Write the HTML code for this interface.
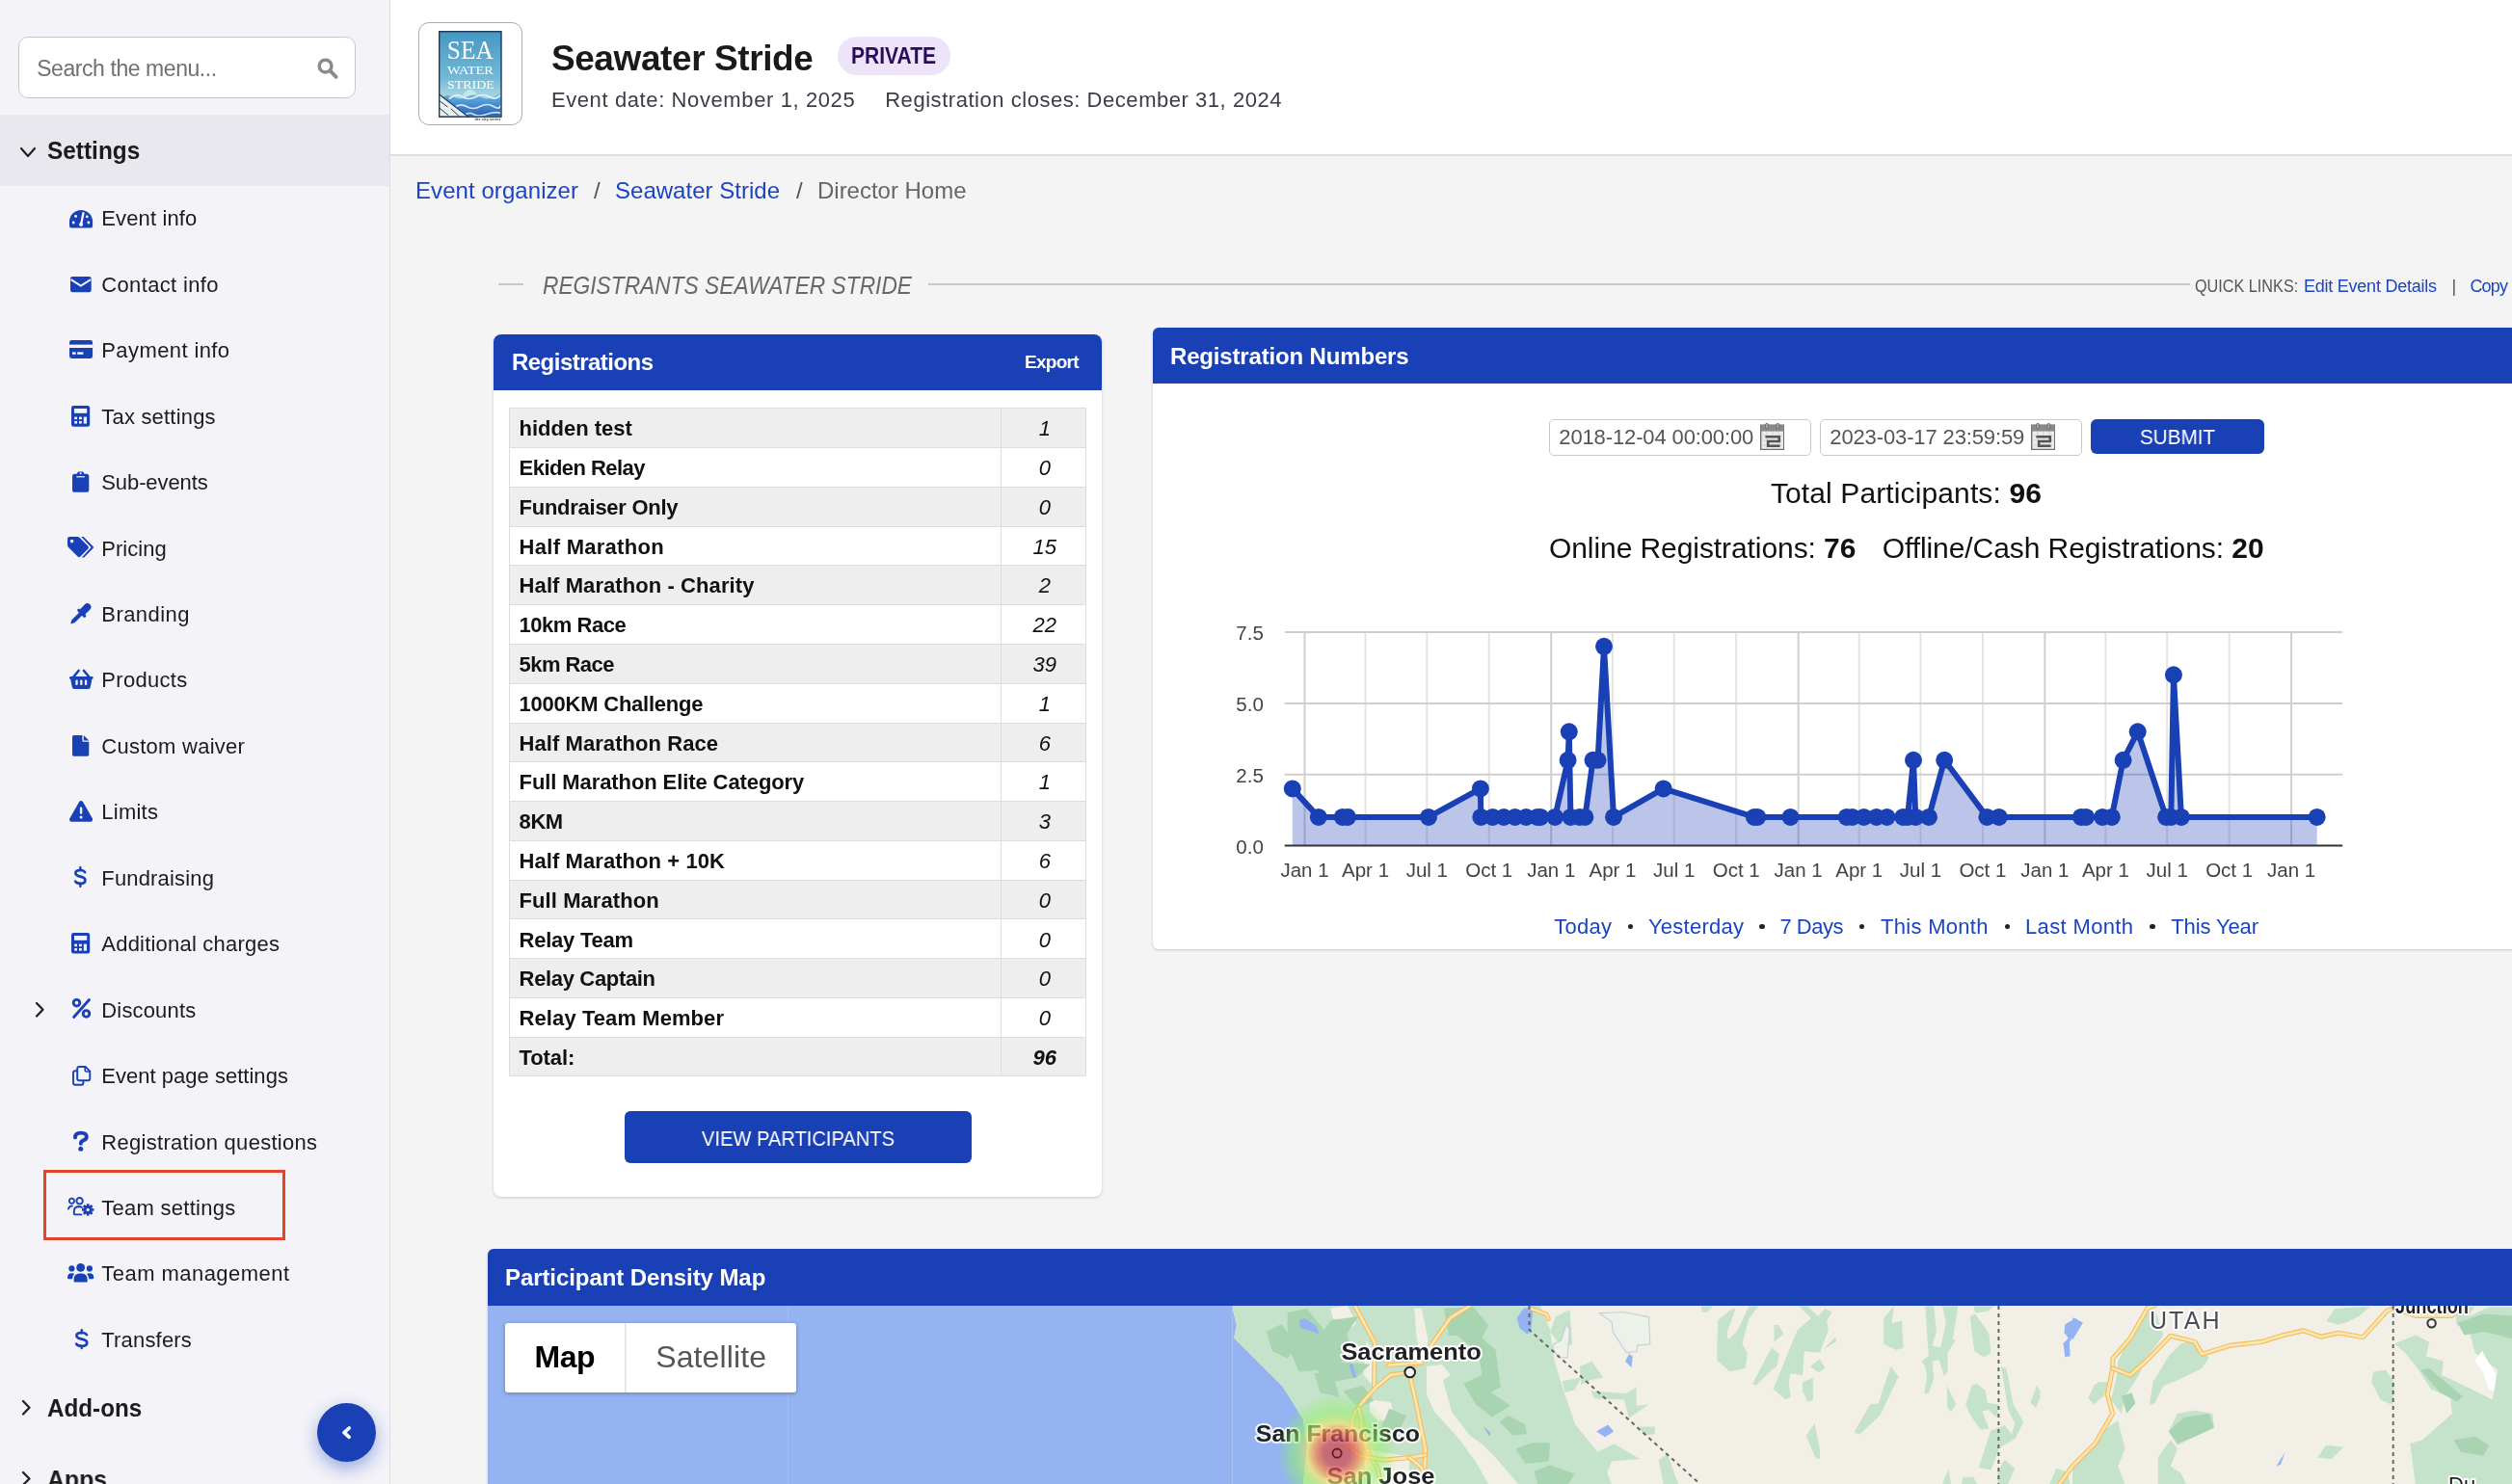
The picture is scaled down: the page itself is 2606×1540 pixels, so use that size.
<!DOCTYPE html>
<html><head><meta charset="utf-8"><title>Seawater Stride - Director Home</title>
<style>
html,body{margin:0;padding:0;width:2606px;height:1540px;overflow:hidden;background:#f4f4f4;}
body{position:relative;font-family:"Liberation Sans",sans-serif;}
.t{position:absolute;white-space:nowrap;line-height:1;}
body{-webkit-font-smoothing:antialiased;}
#root{position:absolute;left:0;top:0;width:2606px;height:1540px;will-change:transform;}
svg{display:block;}
</style></head><body><div id="root">
<div style="position:absolute;left:0.00px;top:0.00px;width:404.00px;height:1540.00px;background:#f3f3f8;"></div>
<div style="position:absolute;left:404.00px;top:0.00px;width:1.00px;height:1540.00px;background:#dcdce3;"></div>
<div style="position:absolute;left:19.00px;top:38.00px;width:350.00px;height:64.00px;background:#fff;border:1px solid #c6c6d0;border-radius:10px;box-sizing:border-box;"></div>
<div class="t" id="t0" style="top:59.93px;font-size:23px;color:#707070;letter-spacing:-0.432px;left:38.20px;"><span>Search the menu...</span></div>
<svg style="position:absolute;left:329.00px;top:60.00px;overflow:visible" width="21.50" height="21.60" viewBox="0 0 21.50 21.60"><circle cx="8.6" cy="8.6" r="6.4" fill="none" stroke="#8a8a8a" stroke-width="3.4"/>
<line x1="13.4" y1="13.4" x2="19.70" y2="19.80" stroke="#8a8a8a" stroke-width="3.8" stroke-linecap="round"/></svg>
<div style="position:absolute;left:0.00px;top:119.00px;width:404.00px;height:73.60px;background:#e9e8ef;"></div>
<svg style="position:absolute;left:21.00px;top:152.50px;overflow:visible" width="16.00" height="10.00" viewBox="0 0 16.00 10.00"><polyline points="1,1 8.00,9.00 15.00,1" fill="none" stroke="#222" stroke-width="2.2" stroke-linecap="round" stroke-linejoin="round"/></svg>
<div class="t" id="t1" style="top:142.99px;font-size:26px;color:#1c1c1c;font-weight:700;transform:scaleX(0.9388);transform-origin:0 0;left:49.40px;"><span>Settings</span></div>
<svg style="position:absolute;left:71.70px;top:217.50px;overflow:visible" width="24.10" height="18.50" viewBox="0 0 24.10 18.50"><path d="M0 12.05 A12.05 12.05 0 0 1 24.10 12.05 V16.50 Q24.10 18.50 22.10 18.50 H2 Q0 18.50 0 16.50 Z" fill="#1a40b6"/>
<line x1="12.05" y1="15.00" x2="14.45" y2="3.2" stroke="#fff" stroke-width="2.2" stroke-linecap="round"/>
<circle cx="12.05" cy="15.00" r="2" fill="#fff"/>
<circle cx="4.2" cy="13.00" r="1.4" fill="#fff"/><circle cx="19.90" cy="13.00" r="1.4" fill="#fff"/>
<circle cx="6.6" cy="6.4" r="1.4" fill="#fff"/><circle cx="18.30" cy="6.8" r="1.4" fill="#fff"/></svg>
<div class="t" id="t2" style="top:216.27px;font-size:22px;color:#1c1c1c;letter-spacing:0.128px;left:105.30px;"><span>Event info</span></div>
<svg style="position:absolute;left:73.00px;top:286.80px;overflow:visible" width="21.70" height="16.20" viewBox="0 0 21.70 16.20"><rect x="0" y="0" width="21.70" height="16.20" rx="2.2" fill="#1a40b6"/>
<polyline points="0.6,3.2 10.85,9.6 21.10,3.2" fill="none" stroke="#f3f3f8" stroke-width="2"/></svg>
<div class="t" id="t3" style="top:284.72px;font-size:22px;color:#1c1c1c;letter-spacing:0.345px;left:105.30px;"><span>Contact info</span></div>
<svg style="position:absolute;left:71.70px;top:353.40px;overflow:visible" width="24.10" height="18.90" viewBox="0 0 24.10 18.90"><rect x="0" y="0" width="24.10" height="18.90" rx="2.4" fill="#1a40b6"/>
<rect x="0" y="4.6" width="24.10" height="3.4" fill="#f3f3f8"/>
<rect x="3" y="12.4" width="3.6" height="2.4" fill="#f3f3f8"/><rect x="8.2" y="12.4" width="6.2" height="2.4" fill="#f3f3f8"/></svg>
<div class="t" id="t4" style="top:353.17px;font-size:22px;color:#1c1c1c;letter-spacing:0.399px;left:105.30px;"><span>Payment info</span></div>
<svg style="position:absolute;left:74.20px;top:421.00px;overflow:visible" width="19.20" height="21.80" viewBox="0 0 19.20 21.80"><rect x="0" y="0" width="19.20" height="21.80" rx="2.4" fill="#1a40b6"/>
<rect x="3" y="3" width="13.20" height="4.8" fill="#f3f3f8"/><rect x="3.20" y="11.60" width="2.8" height="2.6" fill="#f3f3f8"/><rect x="3.20" y="16.00" width="2.8" height="2.6" fill="#f3f3f8"/><rect x="8.00" y="11.60" width="2.8" height="2.6" fill="#f3f3f8"/><rect x="8.00" y="16.00" width="2.8" height="2.6" fill="#f3f3f8"/>
<rect x="12.8" y="11.6" width="3.2" height="7" fill="#f3f3f8"/></svg>
<div class="t" id="t5" style="top:421.62px;font-size:22px;color:#1c1c1c;letter-spacing:0.193px;left:105.30px;"><span>Tax settings</span></div>
<svg style="position:absolute;left:75.00px;top:489.00px;overflow:visible" width="17.30" height="21.80" viewBox="0 0 17.30 21.80"><rect x="0" y="2.8" width="17.30" height="19.00" rx="2.6" fill="#1a40b6"/>
<rect x="5.15" y="0.6" width="7" height="4.4" rx="1.6" fill="#1a40b6"/>
<circle cx="8.65" cy="2.3" r="1" fill="#f3f3f8"/>
<rect x="4.45" y="5.2" width="8.4" height="1.2" fill="#f3f3f8"/></svg>
<div class="t" id="t6" style="top:490.07px;font-size:22px;color:#1c1c1c;letter-spacing:-0.100px;left:105.30px;"><span>Sub-events</span></div>
<svg style="position:absolute;left:70.20px;top:557.00px;overflow:visible" width="27.40" height="22.00" viewBox="0 0 27.40 22.00"><path d="M0 2.2 Q0 0 2.2 0 H10.2 Q11.6 0 12.6 1 L21.4 9.8 Q22.8 11.2 21.4 12.6 L13.4 20.6 Q12 22 10.6 20.6 L1 11 Q0 10 0 8.6 Z" fill="#1a40b6"/>
<circle cx="4.6" cy="4.6" r="1.8" fill="#f3f3f8"/>
<path d="M14.2 0 H16.6 L26.6 10 Q27.6 11 26.6 12 L17.2 21.4 H14.8 L24.6 11 Z" fill="#1a40b6"/></svg>
<div class="t" id="t7" style="top:558.52px;font-size:22px;color:#1c1c1c;letter-spacing:0.025px;left:105.30px;"><span>Pricing</span></div>
<svg style="position:absolute;left:73.00px;top:626.20px;overflow:visible" width="21.80" height="21.30" viewBox="0 0 21.80 21.30"><line x1="14" y1="7.6" x2="17.6" y2="4" stroke="#1a40b6" stroke-width="7.6" stroke-linecap="round"/>
<line x1="9" y1="7.4" x2="14.6" y2="13" stroke="#1a40b6" stroke-width="3.4" stroke-linecap="round"/>
<path d="M10.6 8.2 L13.6 11.2 L5.2 19.6 Q4.4 20.4 3.4 20.6 L1.4 21.2 L0.3 21.2 L0.6 19.9 L1.2 17.9 Q1.4 16.9 2.2 16.6 Z" fill="#1a40b6"/></svg>
<div class="t" id="t8" style="top:626.97px;font-size:22px;color:#1c1c1c;letter-spacing:0.446px;left:105.30px;"><span>Branding</span></div>
<svg style="position:absolute;left:71.60px;top:694.70px;overflow:visible" width="24.60" height="20.10" viewBox="0 0 24.60 20.10"><line x1="4.6" y1="7" x2="9.6" y2="1" stroke="#1a40b6" stroke-width="2.6" stroke-linecap="round"/>
<line x1="20.00" y1="7" x2="15.00" y2="1" stroke="#1a40b6" stroke-width="2.6" stroke-linecap="round"/>
<path d="M1.2 7 H23.40 Q24.60 7 24.60 8.2 V8.6 Q24.60 9.8 23.40 9.8 L21.80 18 Q21.40 20.10 19.60 20.10 H5 Q3.2 20.10 2.8 18 L1.2 9.8 Q0 9.8 0 8.6 V8.2 Q0 7 1.2 7 Z" fill="#1a40b6"/>
<rect x="6.4" y="10.4" width="2.3" height="5.6" rx="1" fill="#f3f3f8"/><rect x="11.15" y="10.4" width="2.3" height="5.6" rx="1" fill="#f3f3f8"/><rect x="15.9" y="10.4" width="2.3" height="5.6" rx="1" fill="#f3f3f8"/></svg>
<div class="t" id="t9" style="top:695.42px;font-size:22px;color:#1c1c1c;letter-spacing:0.296px;left:105.30px;"><span>Products</span></div>
<svg style="position:absolute;left:75.00px;top:763.00px;overflow:visible" width="17.30" height="21.70" viewBox="0 0 17.30 21.70"><path d="M0 1.6 Q0 0 1.6 0 H10.4 V5.4 Q10.4 6.8 11.8 6.8 H17.30 V20.10 Q17.30 21.70 15.70 21.70 H1.6 Q0 21.70 0 20.10 Z" fill="#1a40b6"/>
<path d="M11.8 0 L17.30 5.4 H11.8 Z" fill="#1a40b6"/></svg>
<div class="t" id="t10" style="top:763.87px;font-size:22px;color:#1c1c1c;letter-spacing:0.260px;left:105.30px;"><span>Custom waiver</span></div>
<svg style="position:absolute;left:71.90px;top:831.00px;overflow:visible" width="24.20" height="21.80" viewBox="0 0 24.20 21.80"><path d="M12.10 0 Q13.40 0 14.10 1.2 L24.00 18.60 Q24.60 21.80 21.60 21.80 H2.6 Q-0.4 21.80 0.2 18.60 L10.10 1.2 Q10.80 0 12.10 0 Z" fill="#1a40b6"/>
<rect x="10.90" y="6.6" width="2.4" height="7.2" rx="1.1" fill="#f3f3f8"/>
<circle cx="12.10" cy="16.9" r="1.5" fill="#f3f3f8"/></svg>
<div class="t" id="t11" style="top:832.32px;font-size:22px;color:#1c1c1c;letter-spacing:0.229px;left:105.30px;"><span>Limits</span></div>
<svg style="position:absolute;left:77.30px;top:899.00px;overflow:visible" width="12.70" height="21.90" viewBox="0 0 12.70 21.90"><line x1="6.35" y1="1.1" x2="6.35" y2="4.2" stroke="#1a40b6" stroke-width="2.4" stroke-linecap="round"/>
<line x1="6.35" y1="17.6" x2="6.35" y2="20.80" stroke="#1a40b6" stroke-width="2.4" stroke-linecap="round"/>
<path d="M11.10 6.2 Q9.90 4 6.35 4 Q1.4 4 1.4 7 Q1.4 9.6 6.35 10.6 Q11.40 11.6 11.40 14.4 Q11.40 17.8 6.35 17.8 Q2.4 17.8 1.2 15.6" fill="none" stroke="#1a40b6" stroke-width="2.7" stroke-linecap="round"/></svg>
<div class="t" id="t12" style="top:900.77px;font-size:22px;color:#1c1c1c;letter-spacing:0.165px;left:105.30px;"><span>Fundraising</span></div>
<svg style="position:absolute;left:74.30px;top:968.00px;overflow:visible" width="19.20" height="21.60" viewBox="0 0 19.20 21.60"><rect x="0" y="0" width="19.20" height="21.60" rx="2.4" fill="#1a40b6"/>
<rect x="3" y="3" width="13.20" height="4.8" fill="#f3f3f8"/><rect x="3.20" y="11.60" width="2.8" height="2.6" fill="#f3f3f8"/><rect x="3.20" y="16.00" width="2.8" height="2.6" fill="#f3f3f8"/><rect x="8.00" y="11.60" width="2.8" height="2.6" fill="#f3f3f8"/><rect x="8.00" y="16.00" width="2.8" height="2.6" fill="#f3f3f8"/>
<rect x="12.8" y="11.6" width="3.2" height="7" fill="#f3f3f8"/></svg>
<div class="t" id="t13" style="top:969.22px;font-size:22px;color:#1c1c1c;letter-spacing:0.211px;left:105.30px;"><span>Additional charges</span></div>
<svg style="position:absolute;left:74.60px;top:1036.40px;overflow:visible" width="19.30" height="21.10" viewBox="0 0 19.30 21.10"><circle cx="4.5" cy="4.7" r="3.3" fill="none" stroke="#1a40b6" stroke-width="2.9"/>
<circle cx="14.50" cy="15.90" r="3.3" fill="none" stroke="#1a40b6" stroke-width="2.9"/>
<line x1="17.50" y1="1.5" x2="1.6" y2="19.50" stroke="#1a40b6" stroke-width="2.8" stroke-linecap="round"/></svg>
<div class="t" id="t14" style="top:1037.67px;font-size:22px;color:#1c1c1c;letter-spacing:0.163px;left:105.30px;"><span>Discounts</span></div>
<svg style="position:absolute;left:74.60px;top:1105.50px;overflow:visible" width="19.30" height="20.80" viewBox="0 0 19.30 20.80"><path d="M7.2 1 H13.6 L18.30 5.6 V13.2 Q18.30 15.2 16.30 15.2 H7.2 Q5.2 15.2 5.2 13.2 V3 Q5.2 1 7.2 1 Z" fill="none" stroke="#1a40b6" stroke-width="1.9"/>
<path d="M13.2 1.2 V4.4 Q13.2 6 14.8 6 H18.10" fill="none" stroke="#1a40b6" stroke-width="1.6"/>
<path d="M5.2 5.2 H3 Q1 5.2 1 7.2 V17.80 Q1 19.80 3 19.80 H9.4 Q11.4 19.80 11.4 17.80 V15.2" fill="none" stroke="#1a40b6" stroke-width="1.9"/></svg>
<div class="t" id="t15" style="top:1106.12px;font-size:22px;color:#1c1c1c;letter-spacing:0.019px;left:105.30px;"><span>Event page settings</span></div>
<svg style="position:absolute;left:76.40px;top:1174.00px;overflow:visible" width="15.60" height="20.70" viewBox="0 0 15.60 20.70"><path d="M2 6.4 Q2 1.6 7.80 1.6 Q13.80 1.6 13.80 5.8 Q13.80 8.4 10.20 9.6 Q7.80 10.8 7.80 12.8" fill="none" stroke="#1a40b6" stroke-width="3.9" stroke-linecap="round"/>
<circle cx="7.80" cy="18.20" r="2.5" fill="#1a40b6"/></svg>
<div class="t" id="t16" style="top:1174.57px;font-size:22px;color:#1c1c1c;letter-spacing:0.291px;left:105.30px;"><span>Registration questions</span></div>
<svg style="position:absolute;left:70.20px;top:1242.00px;overflow:visible" width="27.30" height="19.30" viewBox="0 0 27.30 19.30"><circle cx="4.4" cy="4.2" r="2.6" fill="none" stroke="#1a40b6" stroke-width="1.8"/>
<path d="M0.9 12.6 Q1.6 9.6 5 9.4" fill="none" stroke="#1a40b6" stroke-width="1.8" stroke-linecap="round"/>
<circle cx="12.6" cy="4.2" r="3.2" fill="none" stroke="#1a40b6" stroke-width="1.9"/>
<path d="M15 11 Q13.4 10 11.6 10 Q6.8 10.2 6.8 15.2 V17.6 Q6.8 18.4 7.6 18.4 H14.4" fill="none" stroke="#1a40b6" stroke-width="1.9" stroke-linecap="round"/>
<rect x="19.90" y="7.20" width="2.6" height="3.2" fill="#1a40b6" transform="rotate(0 21.2 13.4)"/><rect x="19.90" y="7.20" width="2.6" height="3.2" fill="#1a40b6" transform="rotate(45 21.2 13.4)"/><rect x="19.90" y="7.20" width="2.6" height="3.2" fill="#1a40b6" transform="rotate(90 21.2 13.4)"/><rect x="19.90" y="7.20" width="2.6" height="3.2" fill="#1a40b6" transform="rotate(135 21.2 13.4)"/><rect x="19.90" y="7.20" width="2.6" height="3.2" fill="#1a40b6" transform="rotate(180 21.2 13.4)"/><rect x="19.90" y="7.20" width="2.6" height="3.2" fill="#1a40b6" transform="rotate(225 21.2 13.4)"/><rect x="19.90" y="7.20" width="2.6" height="3.2" fill="#1a40b6" transform="rotate(270 21.2 13.4)"/><rect x="19.90" y="7.20" width="2.6" height="3.2" fill="#1a40b6" transform="rotate(315 21.2 13.4)"/><circle cx="21.2" cy="13.4" r="4.6" fill="#1a40b6"/><circle cx="21.2" cy="13.4" r="1.6" fill="#f3f3f8"/></svg>
<div class="t" id="t17" style="top:1243.02px;font-size:22px;color:#1c1c1c;letter-spacing:0.272px;left:105.30px;"><span>Team settings</span></div>
<svg style="position:absolute;left:70.20px;top:1311.00px;overflow:visible" width="27.30" height="19.40" viewBox="0 0 27.30 19.40"><circle cx="13.65" cy="4.4" r="4.4" fill="#1a40b6"/>
<circle cx="4.4" cy="5.4" r="3.1" fill="#1a40b6"/><circle cx="22.90" cy="5.4" r="3.1" fill="#1a40b6"/>
<path d="M6.65 19.40 V16.4 Q6.65 10.4 13.65 10.4 Q20.65 10.4 20.65 16.4 V19.40 Q20.65 19.40 19.65 19.40 H7.65 Q6.65 19.40 6.65 18.40 Z" fill="#1a40b6"/>
<path d="M0 14.8 Q0 10.2 4.4 10.2 Q6.2 10.2 7.2 11 Q5.2 12.8 5 16.2 H1.2 Q0 16.2 0 15 Z" fill="#1a40b6"/>
<path d="M27.30 14.8 Q27.30 10.2 22.90 10.2 Q21.10 10.2 20.10 11 Q22.10 12.8 22.30 16.2 H26.10 Q27.30 16.2 27.30 15 Z" fill="#1a40b6"/></svg>
<div class="t" id="t18" style="top:1311.47px;font-size:22px;color:#1c1c1c;letter-spacing:0.455px;left:105.30px;"><span>Team management</span></div>
<svg style="position:absolute;left:77.50px;top:1378.50px;overflow:visible" width="13.50" height="21.10" viewBox="0 0 13.50 21.10"><line x1="6.75" y1="1.1" x2="6.75" y2="4.2" stroke="#1a40b6" stroke-width="2.4" stroke-linecap="round"/>
<line x1="6.75" y1="17.6" x2="6.75" y2="20.00" stroke="#1a40b6" stroke-width="2.4" stroke-linecap="round"/>
<path d="M11.90 6.2 Q10.70 4 6.75 4 Q1.4 4 1.4 7 Q1.4 9.6 6.75 10.6 Q12.20 11.6 12.20 14.4 Q12.20 17.8 6.75 17.8 Q2.4 17.8 1.2 15.6" fill="none" stroke="#1a40b6" stroke-width="2.7" stroke-linecap="round"/></svg>
<div class="t" id="t19" style="top:1379.92px;font-size:22px;color:#1c1c1c;letter-spacing:0.176px;left:105.30px;"><span>Transfers</span></div>
<svg style="position:absolute;left:37.00px;top:1039.50px;overflow:visible" width="8.50" height="15.50" viewBox="0 0 8.50 15.50"><polyline points="1,1 7.50,7.75 1,14.50" fill="none" stroke="#222" stroke-width="2.3" stroke-linecap="round" stroke-linejoin="round"/></svg>
<div style="position:absolute;left:45.00px;top:1214.00px;width:250.50px;height:73.00px;border:3px solid #e4442b;box-sizing:border-box;"></div>
<svg style="position:absolute;left:23.00px;top:1453.00px;overflow:visible" width="8.50" height="15.50" viewBox="0 0 8.50 15.50"><polyline points="1,1 7.50,7.75 1,14.50" fill="none" stroke="#222" stroke-width="2.3" stroke-linecap="round" stroke-linejoin="round"/></svg>
<div class="t" id="t20" style="top:1448.49px;font-size:26px;color:#1c1c1c;font-weight:700;transform:scaleX(0.9324);transform-origin:0 0;left:49.10px;"><span>Add-ons</span></div>
<svg style="position:absolute;left:23.00px;top:1526.50px;overflow:visible" width="8.50" height="15.00" viewBox="0 0 8.50 15.00"><polyline points="1,1 7.50,7.50 1,14.00" fill="none" stroke="#222" stroke-width="2.3" stroke-linecap="round" stroke-linejoin="round"/></svg>
<div class="t" id="t21" style="top:1521.99px;font-size:26px;color:#1c1c1c;font-weight:700;transform:scaleX(0.9538);transform-origin:0 0;left:49.10px;"><span>Apps</span></div>
<div style="position:absolute;left:328.90px;top:1455.80px;width:61.00px;height:61.00px;background:#1a40b6;border-radius:50%;box-shadow:0 7px 18px rgba(27,64,184,0.42);"></div>
<svg style="position:absolute;left:355.60px;top:1480.60px;overflow:visible" width="7.20" height="11.40" viewBox="0 0 7.20 11.40"><polyline points="6.20,1 1,5.70 6.20,10.40" fill="none" stroke="#fff" stroke-width="3.6" stroke-linecap="round" stroke-linejoin="round"/></svg>
<div style="position:absolute;left:405.00px;top:0.00px;width:2201.00px;height:160.00px;background:#fff;"></div>
<div style="position:absolute;left:405.00px;top:160.00px;width:2201.00px;height:2.00px;background:#dddee4;"></div>
<div style="position:absolute;left:434.30px;top:23.30px;width:107.50px;height:107.10px;border:1.5px solid #aba8b5;border-radius:11px;box-sizing:border-box;background:#fff;"></div>
<svg style="position:absolute;left:455.2px;top:31.8px" width="65.7" height="99.9" viewBox="0 0 65.7 99.9">
<defs><linearGradient id="lg" x1="0" y1="0" x2="0" y2="1"><stop offset="0" stop-color="#4597c3"/><stop offset="0.55" stop-color="#74b9d8"/><stop offset="0.75" stop-color="#a5d5de"/><stop offset="1" stop-color="#a5d5de"/></linearGradient>
<linearGradient id="wv" x1="0" y1="0" x2="0" y2="1"><stop offset="0" stop-color="#62b4e8"/><stop offset="1" stop-color="#2c62b2"/></linearGradient></defs>
<rect x="0.7" y="0.7" width="64.3" height="88.5" fill="url(#lg)"/>
<circle cx="32.6" cy="68" r="7" fill="#d4ecea" opacity="0.75"/>
<path d="M1.4 71 Q8.5 64.5 15.5 68.5 T29.5 68.5 T43.5 68.5 T57.5 68.5 T64.3 66 V88.5 H1.4 Z" fill="url(#wv)"/>
<path d="M11 70.5 Q18 64.5 24.5 68.5 T38.5 68.5 T52.5 68.5 T64.5 66.5" fill="none" stroke="#e2f2fb" stroke-width="1.7"/>
<path d="M16 80 Q22.5 74.5 29 78.5 T43 78.5 T57 78.5 T64.5 77" fill="none" stroke="#cfe7f8" stroke-width="1.7"/>
<path d="M26 88.5 Q31 83.5 36 86.5 T50 86.5 T64.5 85.5" fill="none" stroke="#bfe0f5" stroke-width="1.7"/>
<path d="M0.7 66 L31 88.6 H0.7 Z" fill="#e9f1ef"/>
<path d="M0.7 66 L31 89.2" stroke="#1e3a56" stroke-width="1.3"/>
<path d="M0.7 72.5 L9.5 79 M0.7 80 L10 87.6 M12.8 80.8 L21.3 88.6" stroke="#1e3a56" stroke-width="1"/>
<rect x="0.7" y="0.7" width="64.3" height="88.5" fill="none" stroke="#1e3a56" stroke-width="1.4"/>
<text x="8.8" y="29.1" font-family="Liberation Serif" font-size="27" fill="#fff" textLength="48" lengthAdjust="spacingAndGlyphs">SEA</text>
<text x="8.9" y="45.2" font-family="Liberation Serif" font-size="13.4" fill="#fff" textLength="48" lengthAdjust="spacingAndGlyphs">WATER</text>
<text x="8.9" y="59.9" font-family="Liberation Serif" font-size="13.4" fill="#fff" textLength="49" lengthAdjust="spacingAndGlyphs">STRIDE</text>
<text x="37.6" y="93.5" font-family="Liberation Sans" font-size="3.6" font-weight="700" fill="#333" textLength="27">the city series</text>
</svg>
<div class="t" id="t22" style="top:41.57px;font-size:37px;color:#1a1a1a;font-weight:700;letter-spacing:-0.403px;left:571.90px;"><span>Seawater Stride</span></div>
<div style="position:absolute;left:869.20px;top:38.20px;width:116.80px;height:39.40px;background:#ede4fa;border-radius:20px;"></div>
<div class="t" id="t23" style="top:46.83px;font-size:23px;color:#2a0c5a;font-weight:700;transform:scaleX(0.9150);transform-origin:0 0;left:883.20px;"><span>PRIVATE</span></div>
<div class="t" id="t24" style="top:92.87px;font-size:22px;color:#3c3c46;letter-spacing:0.607px;left:571.90px;"><span>Event date: November 1, 2025</span></div>
<div class="t" id="t25" style="top:92.87px;font-size:22px;color:#3c3c46;letter-spacing:0.540px;left:918.20px;"><span>Registration closes: December 31, 2024</span></div>
<div style="position:absolute;left:405.00px;top:162.00px;width:2201.00px;height:1378.00px;background:#f4f4f4;"></div>
<div class="t" id="t26" style="top:185.68px;font-size:24px;color:#1b44c0;letter-spacing:0.065px;left:431.00px;"><span>Event organizer</span></div>
<div class="t" style="top:185.68px;font-size:24px;color:#555;left:616.00px;"><span>/</span></div>
<div class="t" id="t27" style="top:185.68px;font-size:24px;color:#1b44c0;letter-spacing:0.017px;left:638.00px;"><span>Seawater Stride</span></div>
<div class="t" style="top:185.68px;font-size:24px;color:#555;left:826.00px;"><span>/</span></div>
<div class="t" id="t28" style="top:185.68px;font-size:24px;color:#666;letter-spacing:-0.017px;left:848.00px;"><span>Director Home</span></div>
<div style="position:absolute;left:517.00px;top:294.00px;width:26.00px;height:2.00px;background:#c8c8c8;"></div>
<div class="t" id="t29" style="top:283.83px;font-size:25px;color:#686868;font-style:italic;transform:scaleX(0.9099);transform-origin:0 0;left:563.00px;"><span>REGISTRANTS SEAWATER STRIDE</span></div>
<div style="position:absolute;left:963.00px;top:294.00px;width:1308.60px;height:2.00px;background:#c8c8c8;"></div>
<div class="t" id="t30" style="top:287.96px;font-size:18px;color:#555;transform:scaleX(0.9006);transform-origin:0 0;left:2277.00px;"><span>QUICK LINKS:</span></div>
<div class="t" id="t31" style="top:287.96px;font-size:18px;color:#1b44c0;letter-spacing:-0.240px;left:2390.00px;"><span>Edit Event Details</span></div>
<div class="t" style="top:287.96px;font-size:18px;color:#555;left:2543.50px;"><span>|</span></div>
<div class="t" id="t32" style="top:287.96px;font-size:18px;color:#1b44c0;letter-spacing:-0.810px;left:2562.40px;"><span>Copy</span></div>
<div style="position:absolute;left:512.00px;top:347.00px;width:631.00px;height:895.00px;background:#fff;border-radius:8px;box-shadow:0 1px 3px rgba(0,0,0,0.18);"></div>
<div style="position:absolute;left:512.00px;top:347.00px;width:631.00px;height:58.00px;background:#1a40b6;border-radius:8px 8px 0 0;"></div>
<div class="t" id="t33" style="top:364.08px;font-size:24px;color:#fff;font-weight:700;letter-spacing:-0.531px;left:531.00px;"><span>Registrations</span></div>
<div class="t" id="t34" style="top:365.71px;font-size:19px;color:#fff;font-weight:700;letter-spacing:-0.717px;left:1063.00px;"><span>Export</span></div>
<div style="position:absolute;left:528.40px;top:423.30px;width:598.20px;height:693.26px;background:#fff;border:1px solid #dcdcdc;box-sizing:border-box;"></div>
<div style="position:absolute;left:529.40px;top:424.30px;width:596.20px;height:39.78px;background:#eeeeee;"></div>
<div class="t" id="row0" style="top:434.37px;font-size:22px;color:#111;font-weight:700;letter-spacing:-0.014px;left:538.60px;"><span>hidden test</span></div>
<div class="t" style="top:434.37px;font-size:22px;color:#111;font-style:italic;left:83.80px;width:2000px;text-align:center;"><span>1</span></div>
<div style="position:absolute;left:528.40px;top:464.08px;width:598.20px;height:1.00px;background:#dcdcdc;"></div>
<div class="t" id="row1" style="top:475.15px;font-size:22px;color:#111;font-weight:700;letter-spacing:-0.559px;left:538.60px;"><span>Ekiden Relay</span></div>
<div class="t" style="top:475.15px;font-size:22px;color:#111;font-style:italic;left:83.80px;width:2000px;text-align:center;"><span>0</span></div>
<div style="position:absolute;left:529.40px;top:505.86px;width:596.20px;height:39.78px;background:#eeeeee;"></div>
<div style="position:absolute;left:528.40px;top:504.86px;width:598.20px;height:1.00px;background:#dcdcdc;"></div>
<div class="t" id="row2" style="top:515.93px;font-size:22px;color:#111;font-weight:700;letter-spacing:-0.266px;left:538.60px;"><span>Fundraiser Only</span></div>
<div class="t" style="top:515.93px;font-size:22px;color:#111;font-style:italic;left:83.80px;width:2000px;text-align:center;"><span>0</span></div>
<div style="position:absolute;left:528.40px;top:545.64px;width:598.20px;height:1.00px;background:#dcdcdc;"></div>
<div class="t" id="row3" style="top:556.71px;font-size:22px;color:#111;font-weight:700;letter-spacing:0.276px;left:538.60px;"><span>Half Marathon</span></div>
<div class="t" style="top:556.71px;font-size:22px;color:#111;font-style:italic;left:83.80px;width:2000px;text-align:center;"><span>15</span></div>
<div style="position:absolute;left:529.40px;top:587.42px;width:596.20px;height:39.78px;background:#eeeeee;"></div>
<div style="position:absolute;left:528.40px;top:586.42px;width:598.20px;height:1.00px;background:#dcdcdc;"></div>
<div class="t" id="row4" style="top:597.49px;font-size:22px;color:#111;font-weight:700;letter-spacing:0.080px;left:538.60px;"><span>Half Marathon - Charity</span></div>
<div class="t" style="top:597.49px;font-size:22px;color:#111;font-style:italic;left:83.80px;width:2000px;text-align:center;"><span>2</span></div>
<div style="position:absolute;left:528.40px;top:627.20px;width:598.20px;height:1.00px;background:#dcdcdc;"></div>
<div class="t" id="row5" style="top:638.27px;font-size:22px;color:#111;font-weight:700;letter-spacing:-0.486px;left:538.60px;"><span>10km Race</span></div>
<div class="t" style="top:638.27px;font-size:22px;color:#111;font-style:italic;left:83.80px;width:2000px;text-align:center;"><span>22</span></div>
<div style="position:absolute;left:529.40px;top:668.98px;width:596.20px;height:39.78px;background:#eeeeee;"></div>
<div style="position:absolute;left:528.40px;top:667.98px;width:598.20px;height:1.00px;background:#dcdcdc;"></div>
<div class="t" id="row6" style="top:679.05px;font-size:22px;color:#111;font-weight:700;letter-spacing:-0.564px;left:538.60px;"><span>5km Race</span></div>
<div class="t" style="top:679.05px;font-size:22px;color:#111;font-style:italic;left:83.80px;width:2000px;text-align:center;"><span>39</span></div>
<div style="position:absolute;left:528.40px;top:708.76px;width:598.20px;height:1.00px;background:#dcdcdc;"></div>
<div class="t" id="row7" style="top:719.83px;font-size:22px;color:#111;font-weight:700;letter-spacing:-0.234px;left:538.60px;"><span>1000KM Challenge</span></div>
<div class="t" style="top:719.83px;font-size:22px;color:#111;font-style:italic;left:83.80px;width:2000px;text-align:center;"><span>1</span></div>
<div style="position:absolute;left:529.40px;top:750.54px;width:596.20px;height:39.78px;background:#eeeeee;"></div>
<div style="position:absolute;left:528.40px;top:749.54px;width:598.20px;height:1.00px;background:#dcdcdc;"></div>
<div class="t" id="row8" style="top:760.61px;font-size:22px;color:#111;font-weight:700;letter-spacing:0.059px;left:538.60px;"><span>Half Marathon Race</span></div>
<div class="t" style="top:760.61px;font-size:22px;color:#111;font-style:italic;left:83.80px;width:2000px;text-align:center;"><span>6</span></div>
<div style="position:absolute;left:528.40px;top:790.32px;width:598.20px;height:1.00px;background:#dcdcdc;"></div>
<div class="t" id="row9" style="top:801.39px;font-size:22px;color:#111;font-weight:700;letter-spacing:-0.095px;left:538.60px;"><span>Full Marathon Elite Category</span></div>
<div class="t" style="top:801.39px;font-size:22px;color:#111;font-style:italic;left:83.80px;width:2000px;text-align:center;"><span>1</span></div>
<div style="position:absolute;left:529.40px;top:832.10px;width:596.20px;height:39.78px;background:#eeeeee;"></div>
<div style="position:absolute;left:528.40px;top:831.10px;width:598.20px;height:1.00px;background:#dcdcdc;"></div>
<div class="t" id="row10" style="top:842.17px;font-size:22px;color:#111;font-weight:700;letter-spacing:-0.427px;left:538.60px;"><span>8KM</span></div>
<div class="t" style="top:842.17px;font-size:22px;color:#111;font-style:italic;left:83.80px;width:2000px;text-align:center;"><span>3</span></div>
<div style="position:absolute;left:528.40px;top:871.88px;width:598.20px;height:1.00px;background:#dcdcdc;"></div>
<div class="t" id="row11" style="top:882.95px;font-size:22px;color:#111;font-weight:700;letter-spacing:0.066px;left:538.60px;"><span>Half Marathon + 10K</span></div>
<div class="t" style="top:882.95px;font-size:22px;color:#111;font-style:italic;left:83.80px;width:2000px;text-align:center;"><span>6</span></div>
<div style="position:absolute;left:529.40px;top:913.66px;width:596.20px;height:39.78px;background:#eeeeee;"></div>
<div style="position:absolute;left:528.40px;top:912.66px;width:598.20px;height:1.00px;background:#dcdcdc;"></div>
<div class="t" id="row12" style="top:923.73px;font-size:22px;color:#111;font-weight:700;letter-spacing:0.065px;left:538.60px;"><span>Full Marathon</span></div>
<div class="t" style="top:923.73px;font-size:22px;color:#111;font-style:italic;left:83.80px;width:2000px;text-align:center;"><span>0</span></div>
<div style="position:absolute;left:528.40px;top:953.44px;width:598.20px;height:1.00px;background:#dcdcdc;"></div>
<div class="t" id="row13" style="top:964.51px;font-size:22px;color:#111;font-weight:700;letter-spacing:-0.240px;left:538.60px;"><span>Relay Team</span></div>
<div class="t" style="top:964.51px;font-size:22px;color:#111;font-style:italic;left:83.80px;width:2000px;text-align:center;"><span>0</span></div>
<div style="position:absolute;left:529.40px;top:995.22px;width:596.20px;height:39.78px;background:#eeeeee;"></div>
<div style="position:absolute;left:528.40px;top:994.22px;width:598.20px;height:1.00px;background:#dcdcdc;"></div>
<div class="t" id="row14" style="top:1005.29px;font-size:22px;color:#111;font-weight:700;letter-spacing:-0.342px;left:538.60px;"><span>Relay Captain</span></div>
<div class="t" style="top:1005.29px;font-size:22px;color:#111;font-style:italic;left:83.80px;width:2000px;text-align:center;"><span>0</span></div>
<div style="position:absolute;left:528.40px;top:1035.00px;width:598.20px;height:1.00px;background:#dcdcdc;"></div>
<div class="t" id="row15" style="top:1046.07px;font-size:22px;color:#111;font-weight:700;letter-spacing:0.079px;left:538.60px;"><span>Relay Team Member</span></div>
<div class="t" style="top:1046.07px;font-size:22px;color:#111;font-style:italic;left:83.80px;width:2000px;text-align:center;"><span>0</span></div>
<div style="position:absolute;left:529.40px;top:1076.78px;width:596.20px;height:38.78px;background:#eeeeee;"></div>
<div style="position:absolute;left:528.40px;top:1075.78px;width:598.20px;height:1.00px;background:#dcdcdc;"></div>
<div class="t" id="row16" style="top:1086.85px;font-size:22px;color:#111;font-weight:700;letter-spacing:-0.110px;left:538.60px;"><span>Total:</span></div>
<div class="t" style="top:1086.85px;font-size:22px;color:#111;font-weight:700;font-style:italic;left:83.80px;width:2000px;text-align:center;"><span>96</span></div>
<div style="position:absolute;left:1038.00px;top:423.30px;width:1.00px;height:693.26px;background:#dcdcdc;"></div>
<div style="position:absolute;left:648.00px;top:1153.00px;width:359.70px;height:53.60px;background:#1a40b6;border-radius:6px;"></div>
<div class="t" id="vp" style="top:1171.37px;font-size:22px;color:#fff;transform:scaleX(0.9140);transform-origin:50% 0;left:-172.15px;width:2000px;text-align:center;"><span>VIEW PARTICIPANTS</span></div>
<div style="position:absolute;left:1196.00px;top:340.00px;width:1420.00px;height:644.50px;background:#fff;border-radius:6px 0 0 6px;box-shadow:0 1px 3px rgba(0,0,0,0.18);"></div>
<div style="position:absolute;left:1196.00px;top:340.00px;width:1420.00px;height:58.30px;background:#1a40b6;border-radius:6px 0 0 0;"></div>
<div class="t" id="t53" style="top:357.68px;font-size:24px;color:#fff;font-weight:700;letter-spacing:-0.164px;left:1214.00px;"><span>Registration Numbers</span></div>
<div style="position:absolute;left:1607.00px;top:434.90px;width:271.80px;height:37.90px;background:#fff;border:1px solid #c8c8c8;border-radius:5px;box-sizing:border-box;"></div>
<div class="t" id="t54" style="top:443.27px;font-size:22px;color:#555;letter-spacing:-0.128px;left:1617.30px;"><span>2018-12-04 00:00:00</span></div>
<svg style="position:absolute;left:1825.8px;top:438.6px" width="25.4" height="28.2" viewBox="0 0 25.4 28.2"><rect x="0.7" y="2.2" width="24" height="25.3" fill="#ececec" stroke="#6e6e6e" stroke-width="1.4"/><rect x="0.7" y="2.2" width="24" height="6.4" fill="#8a8a8a"/><path d="M1 13 H24.4 M1 18 H24.4 M1 23 H24.4 M7 9 V27 M13 9 V27 M19 9 V27" stroke="#d0d0d0" stroke-width="0.9"/><rect x="5.6" y="0.4" width="2.8" height="5.6" rx="1.2" fill="#aaa" stroke="#666" stroke-width="0.9"/><rect x="17" y="0.4" width="2.8" height="5.6" rx="1.2" fill="#aaa" stroke="#666" stroke-width="0.9"/><path d="M5.4 14.2 H19.8 V19 H8.2 V23.8 H20.6" fill="none" stroke="#555" stroke-width="2.6"/></svg>
<div style="position:absolute;left:1888.00px;top:434.90px;width:271.80px;height:37.90px;background:#fff;border:1px solid #c8c8c8;border-radius:5px;box-sizing:border-box;"></div>
<div class="t" id="t55" style="top:443.27px;font-size:22px;color:#555;letter-spacing:-0.128px;left:1898.30px;"><span>2023-03-17 23:59:59</span></div>
<svg style="position:absolute;left:2106.8px;top:438.6px" width="25.4" height="28.2" viewBox="0 0 25.4 28.2"><rect x="0.7" y="2.2" width="24" height="25.3" fill="#ececec" stroke="#6e6e6e" stroke-width="1.4"/><rect x="0.7" y="2.2" width="24" height="6.4" fill="#8a8a8a"/><path d="M1 13 H24.4 M1 18 H24.4 M1 23 H24.4 M7 9 V27 M13 9 V27 M19 9 V27" stroke="#d0d0d0" stroke-width="0.9"/><rect x="5.6" y="0.4" width="2.8" height="5.6" rx="1.2" fill="#aaa" stroke="#666" stroke-width="0.9"/><rect x="17" y="0.4" width="2.8" height="5.6" rx="1.2" fill="#aaa" stroke="#666" stroke-width="0.9"/><path d="M5.4 14.2 H19.8 V19 H8.2 V23.8 H20.6" fill="none" stroke="#555" stroke-width="2.6"/></svg>
<div style="position:absolute;left:2169.00px;top:434.90px;width:180.20px;height:35.70px;background:#1a40b6;border-radius:6px;"></div>
<div class="t" id="submit" style="top:443.27px;font-size:22px;color:#fff;transform:scaleX(0.9408);transform-origin:50% 0;left:1259.10px;width:2000px;text-align:center;"><span>SUBMIT</span></div>
<div class="t" id="tp" style="top:496.50px;font-size:30px;color:#111;letter-spacing:0.119px;left:1836.90px;"><span>Total Participants: <b>96</b></span></div>
<div class="t" id="onl" style="top:553.60px;font-size:30px;color:#111;letter-spacing:-0.078px;left:1607.00px;"><span>Online Registrations: <b>76</b></span></div>
<div class="t" id="off" style="top:553.60px;font-size:30px;color:#111;letter-spacing:-0.072px;left:1952.70px;"><span>Offline/Cash Registrations: <b>20</b></span></div>
<svg style="position:absolute;left:0;top:0" width="2606" height="1540" viewBox="0 0 2606 1540"><line x1="1353.50" y1="655" x2="1353.50" y2="877.4" stroke="#cfcfcf" stroke-width="2"/><line x1="1416.56" y1="655" x2="1416.56" y2="877.4" stroke="#e4e4e4" stroke-width="2"/><line x1="1480.31" y1="655" x2="1480.31" y2="877.4" stroke="#e4e4e4" stroke-width="2"/><line x1="1544.77" y1="655" x2="1544.77" y2="877.4" stroke="#e4e4e4" stroke-width="2"/><line x1="1609.22" y1="655" x2="1609.22" y2="877.4" stroke="#cfcfcf" stroke-width="2"/><line x1="1672.98" y1="655" x2="1672.98" y2="877.4" stroke="#e4e4e4" stroke-width="2"/><line x1="1736.74" y1="655" x2="1736.74" y2="877.4" stroke="#e4e4e4" stroke-width="2"/><line x1="1801.19" y1="655" x2="1801.19" y2="877.4" stroke="#e4e4e4" stroke-width="2"/><line x1="1865.65" y1="655" x2="1865.65" y2="877.4" stroke="#cfcfcf" stroke-width="2"/><line x1="1928.71" y1="655" x2="1928.71" y2="877.4" stroke="#e4e4e4" stroke-width="2"/><line x1="1992.46" y1="655" x2="1992.46" y2="877.4" stroke="#e4e4e4" stroke-width="2"/><line x1="2056.92" y1="655" x2="2056.92" y2="877.4" stroke="#e4e4e4" stroke-width="2"/><line x1="2121.38" y1="655" x2="2121.38" y2="877.4" stroke="#cfcfcf" stroke-width="2"/><line x1="2184.43" y1="655" x2="2184.43" y2="877.4" stroke="#e4e4e4" stroke-width="2"/><line x1="2248.19" y1="655" x2="2248.19" y2="877.4" stroke="#e4e4e4" stroke-width="2"/><line x1="2312.64" y1="655" x2="2312.64" y2="877.4" stroke="#e4e4e4" stroke-width="2"/><line x1="2377.10" y1="655" x2="2377.10" y2="877.4" stroke="#cfcfcf" stroke-width="2"/><line x1="1332.7" y1="656.0" x2="2430.2" y2="656.0" stroke="#cfcfcf" stroke-width="2"/><line x1="1332.7" y1="729.9" x2="2430.2" y2="729.9" stroke="#cfcfcf" stroke-width="2"/><line x1="1332.7" y1="803.7" x2="2430.2" y2="803.7" stroke="#cfcfcf" stroke-width="2"/><polygon points="1340.8,877.4 1340.8,818.4 1367.8,847.9 1392.7,847.9 1398.0,847.9 1482.0,847.9 1535.9,818.4 1536.3,847.9 1548.6,847.9 1560.1,847.9 1571.7,847.9 1583.2,847.9 1594.8,847.9 1598.2,847.9 1613.2,847.9 1626.6,788.8 1627.8,759.3 1629.4,847.9 1638.6,847.9 1644.4,847.9 1652.5,788.8 1657.6,788.8 1664.0,670.8 1674.0,847.9 1725.7,818.4 1819.9,847.9 1823.3,847.9 1857.5,847.9 1915.7,847.9 1921.7,847.9 1933.6,847.9 1946.7,847.9 1957.5,847.9 1974.2,847.9 1979.0,847.9 1985.0,788.8 1987.3,847.9 2001.0,847.9 2017.2,788.8 2061.4,847.9 2073.8,847.9 2158.9,847.9 2164.1,847.9 2181.1,847.9 2190.8,847.9 2202.6,788.8 2217.7,759.3 2247.1,847.9 2252.3,847.9 2254.9,700.3 2262.9,847.9 2403.7,847.9 2403.7,877.4" fill="#1a40b6" fill-opacity="0.3"/><line x1="1332.7" y1="877.4" x2="2430.2" y2="877.4" stroke="#333" stroke-width="2"/><polyline points="1340.8,818.4 1367.8,847.9 1392.7,847.9 1398.0,847.9 1482.0,847.9 1535.9,818.4 1536.3,847.9 1548.6,847.9 1560.1,847.9 1571.7,847.9 1583.2,847.9 1594.8,847.9 1598.2,847.9 1613.2,847.9 1626.6,788.8 1627.8,759.3 1629.4,847.9 1638.6,847.9 1644.4,847.9 1652.5,788.8 1657.6,788.8 1664.0,670.8 1674.0,847.9 1725.7,818.4 1819.9,847.9 1823.3,847.9 1857.5,847.9 1915.7,847.9 1921.7,847.9 1933.6,847.9 1946.7,847.9 1957.5,847.9 1974.2,847.9 1979.0,847.9 1985.0,788.8 1987.3,847.9 2001.0,847.9 2017.2,788.8 2061.4,847.9 2073.8,847.9 2158.9,847.9 2164.1,847.9 2181.1,847.9 2190.8,847.9 2202.6,788.8 2217.7,759.3 2247.1,847.9 2252.3,847.9 2254.9,700.3 2262.9,847.9 2403.7,847.9" fill="none" stroke="#1a40b6" stroke-width="6" stroke-linejoin="round" stroke-linecap="round"/><circle cx="1340.8" cy="818.4" r="9" fill="#1a40b6"/><circle cx="1367.8" cy="847.9" r="9" fill="#1a40b6"/><circle cx="1392.7" cy="847.9" r="9" fill="#1a40b6"/><circle cx="1398.0" cy="847.9" r="9" fill="#1a40b6"/><circle cx="1482.0" cy="847.9" r="9" fill="#1a40b6"/><circle cx="1535.9" cy="818.4" r="9" fill="#1a40b6"/><circle cx="1536.3" cy="847.9" r="9" fill="#1a40b6"/><circle cx="1548.6" cy="847.9" r="9" fill="#1a40b6"/><circle cx="1560.1" cy="847.9" r="9" fill="#1a40b6"/><circle cx="1571.7" cy="847.9" r="9" fill="#1a40b6"/><circle cx="1583.2" cy="847.9" r="9" fill="#1a40b6"/><circle cx="1594.8" cy="847.9" r="9" fill="#1a40b6"/><circle cx="1598.2" cy="847.9" r="9" fill="#1a40b6"/><circle cx="1613.2" cy="847.9" r="9" fill="#1a40b6"/><circle cx="1626.6" cy="788.8" r="9" fill="#1a40b6"/><circle cx="1627.8" cy="759.3" r="9" fill="#1a40b6"/><circle cx="1629.4" cy="847.9" r="9" fill="#1a40b6"/><circle cx="1638.6" cy="847.9" r="9" fill="#1a40b6"/><circle cx="1644.4" cy="847.9" r="9" fill="#1a40b6"/><circle cx="1652.5" cy="788.8" r="9" fill="#1a40b6"/><circle cx="1657.6" cy="788.8" r="9" fill="#1a40b6"/><circle cx="1664.0" cy="670.8" r="9" fill="#1a40b6"/><circle cx="1674.0" cy="847.9" r="9" fill="#1a40b6"/><circle cx="1725.7" cy="818.4" r="9" fill="#1a40b6"/><circle cx="1819.9" cy="847.9" r="9" fill="#1a40b6"/><circle cx="1823.3" cy="847.9" r="9" fill="#1a40b6"/><circle cx="1857.5" cy="847.9" r="9" fill="#1a40b6"/><circle cx="1915.7" cy="847.9" r="9" fill="#1a40b6"/><circle cx="1921.7" cy="847.9" r="9" fill="#1a40b6"/><circle cx="1933.6" cy="847.9" r="9" fill="#1a40b6"/><circle cx="1946.7" cy="847.9" r="9" fill="#1a40b6"/><circle cx="1957.5" cy="847.9" r="9" fill="#1a40b6"/><circle cx="1974.2" cy="847.9" r="9" fill="#1a40b6"/><circle cx="1979.0" cy="847.9" r="9" fill="#1a40b6"/><circle cx="1985.0" cy="788.8" r="9" fill="#1a40b6"/><circle cx="1987.3" cy="847.9" r="9" fill="#1a40b6"/><circle cx="2001.0" cy="847.9" r="9" fill="#1a40b6"/><circle cx="2017.2" cy="788.8" r="9" fill="#1a40b6"/><circle cx="2061.4" cy="847.9" r="9" fill="#1a40b6"/><circle cx="2073.8" cy="847.9" r="9" fill="#1a40b6"/><circle cx="2158.9" cy="847.9" r="9" fill="#1a40b6"/><circle cx="2164.1" cy="847.9" r="9" fill="#1a40b6"/><circle cx="2181.1" cy="847.9" r="9" fill="#1a40b6"/><circle cx="2190.8" cy="847.9" r="9" fill="#1a40b6"/><circle cx="2202.6" cy="788.8" r="9" fill="#1a40b6"/><circle cx="2217.7" cy="759.3" r="9" fill="#1a40b6"/><circle cx="2247.1" cy="847.9" r="9" fill="#1a40b6"/><circle cx="2252.3" cy="847.9" r="9" fill="#1a40b6"/><circle cx="2254.9" cy="700.3" r="9" fill="#1a40b6"/><circle cx="2262.9" cy="847.9" r="9" fill="#1a40b6"/><circle cx="2403.7" cy="847.9" r="9" fill="#1a40b6"/><g font-family="Liberation Sans" font-size="20.5" fill="#444"><text x="1310.8" y="664.3" text-anchor="end">7.5</text><text x="1310.8" y="738.3" text-anchor="end">5.0</text><text x="1310.8" y="811.5" text-anchor="end">2.5</text><text x="1310.8" y="885.5" text-anchor="end">0.0</text><text x="1353.50" y="909.8" text-anchor="middle">Jan 1</text><text x="1416.56" y="909.8" text-anchor="middle">Apr 1</text><text x="1480.31" y="909.8" text-anchor="middle">Jul 1</text><text x="1544.77" y="909.8" text-anchor="middle">Oct 1</text><text x="1609.22" y="909.8" text-anchor="middle">Jan 1</text><text x="1672.98" y="909.8" text-anchor="middle">Apr 1</text><text x="1736.74" y="909.8" text-anchor="middle">Jul 1</text><text x="1801.19" y="909.8" text-anchor="middle">Oct 1</text><text x="1865.65" y="909.8" text-anchor="middle">Jan 1</text><text x="1928.71" y="909.8" text-anchor="middle">Apr 1</text><text x="1992.46" y="909.8" text-anchor="middle">Jul 1</text><text x="2056.92" y="909.8" text-anchor="middle">Oct 1</text><text x="2121.38" y="909.8" text-anchor="middle">Jan 1</text><text x="2184.43" y="909.8" text-anchor="middle">Apr 1</text><text x="2248.19" y="909.8" text-anchor="middle">Jul 1</text><text x="2312.64" y="909.8" text-anchor="middle">Oct 1</text><text x="2377.10" y="909.8" text-anchor="middle">Jan 1</text></g></svg>
<div class="t" id="t60" style="top:951.37px;font-size:22px;color:#1b44c0;letter-spacing:0.295px;left:1612.20px;"><span>Today</span></div>
<div class="t" id="t61" style="top:951.37px;font-size:22px;color:#1b44c0;letter-spacing:0.257px;left:1709.90px;"><span>Yesterday</span></div>
<div class="t" id="t62" style="top:951.37px;font-size:22px;color:#1b44c0;letter-spacing:-0.497px;left:1846.50px;"><span>7 Days</span></div>
<div class="t" id="t63" style="top:951.37px;font-size:22px;color:#1b44c0;letter-spacing:0.297px;left:1951.00px;"><span>This Month</span></div>
<div class="t" id="t64" style="top:951.37px;font-size:22px;color:#1b44c0;letter-spacing:0.351px;left:2101.00px;"><span>Last Month</span></div>
<div class="t" id="t65" style="top:951.37px;font-size:22px;color:#1b44c0;letter-spacing:-0.129px;left:2252.30px;"><span>This Year</span></div>
<div style="position:absolute;left:1688.80px;top:959.20px;width:5.20px;height:5.20px;background:#222;border-radius:50%;"></div>
<div style="position:absolute;left:1825.40px;top:959.20px;width:5.20px;height:5.20px;background:#222;border-radius:50%;"></div>
<div style="position:absolute;left:1929.00px;top:959.20px;width:5.20px;height:5.20px;background:#222;border-radius:50%;"></div>
<div style="position:absolute;left:2080.10px;top:959.20px;width:5.20px;height:5.20px;background:#222;border-radius:50%;"></div>
<div style="position:absolute;left:2230.40px;top:959.20px;width:5.20px;height:5.20px;background:#222;border-radius:50%;"></div>
<div style="position:absolute;left:506px;top:1296px;width:2110px;height:260px;background:#fff;border-radius:6px 0 0 0;box-shadow:0 1px 3px rgba(0,0,0,0.18);"></div>
<div style="position:absolute;left:506px;top:1296px;width:2110px;height:59px;background:#1a40b6;border-radius:6px 0 0 0;"></div>
<div class="t" id="t66" style="top:1313.68px;font-size:24px;color:#fff;font-weight:700;letter-spacing:-0.080px;left:524.00px;"><span>Participant Density Map</span></div>
<svg style="position:absolute;left:0;top:0" width="2606" height="1540" viewBox="0 0 2606 1540"><clipPath id="mclip"><rect x="506" y="1355" width="2100" height="185"/></clipPath><g clip-path="url(#mclip)"><rect x="506" y="1355" width="2100" height="185" fill="#94b3f0"/><rect x="817" y="1355" width="1" height="185" fill="#a3bef3"/><polygon points="1278.3,1355 1282.8,1375.6 1280.2,1388.4 1295.6,1403.8 1330.2,1438.3 1341.7,1456.2 1351.9,1472.9 1356,1500 1352,1540 2606,1540 2606,1355" fill="#f2efe6"/><rect x="1278" y="1355" width="1" height="185" fill="#a9c2f3"/><polygon points="1278.3,1355 1282.8,1375.6 1280.2,1388.4 1295.6,1403.8 1330.2,1438.3 1341.7,1456.2 1351.9,1472.9 1356,1500 1352,1540 1672,1540 1660,1510 1634,1478 1621,1440 1612,1410 1608,1380 1598,1355" fill="#c5e2ca"/><polygon points="1380.1,1357.7 1398.0,1355.1 1407.0,1373.0 1403.1,1376.9 1382.6,1367.9" fill="#f2efe6"/><polygon points="1467.1,1357.7 1474.8,1357.7 1481.2,1388.4 1479.9,1411.4 1474.8,1414.0 1469.7,1388.4" fill="#f2efe6"/><polygon points="1417.2,1391.0 1427.5,1405.0 1423.6,1437.0 1414.6,1426.8" fill="#f2efe6"/><polygon points="1421.0,1452.4 1442.8,1455.0 1446.7,1471.6 1430.0,1475.4 1421.0,1465.2" fill="#f2efe6"/><polygon points="1414.6,1503.6 1436.4,1507.5 1462.0,1511.3 1462.0,1540.0 1417.2,1540.0" fill="#f2efe6"/><polygon points="1335.7,1361.9 1355.6,1358.0 1373.5,1379.9 1381.5,1369.9 1409.3,1365.9 1397.4,1383.8 1401.4,1401.8 1391.4,1413.7 1421.3,1415.7 1407.3,1429.6 1385.4,1433.6 1365.5,1421.7 1347.6,1423.6 1335.7,1395.8" fill="#a9d4b2"/><polygon points="1313.8,1381.8 1329.7,1373.9 1345.6,1397.8 1335.7,1409.7 1319.8,1401.8" fill="#a9d4b2"/><polygon points="1363.6,1425.6 1381.5,1421.7 1389.4,1449.5 1369.5,1445.5" fill="#a9d4b2"/><polygon points="1393.4,1443.6 1413.3,1437.6 1425.3,1453.5 1409.3,1461.5" fill="#a9d4b2"/><polygon points="1441.2,1461.5 1459.1,1469.4 1449.1,1489.3 1433.2,1481.4" fill="#a9d4b2"/><polygon points="1480,1418 1496,1416 1505,1427 1497,1432 1506,1465 1525,1490 1537,1498 1552,1513 1575,1540 1544,1540 1531,1517 1512,1491 1488,1465 1480,1447" fill="#f2efe6"/><polygon points="1497.9,1357.7 1528.7,1356.4 1544.0,1375.6 1537.6,1388.4 1551.7,1401.2 1556.8,1439.6 1546.6,1444.8 1567.1,1458.8 1547.9,1470.4 1531.2,1457.6 1518.4,1435.8 1537.6,1426.8 1533.8,1403.8 1512.0,1385.9 1503.0,1385.9" fill="#a9d4b2"/><polygon points="1555.5,1475.5 1564.5,1469.1 1582.4,1478.0 1583.7,1488.3 1569.6,1489.6" fill="#a9d4b2"/><polygon points="1572.2,1503.6 1588.8,1497.2 1608.0,1497.2 1606.8,1516.5 1582.4,1519.0" fill="#a9d4b2"/><polygon points="1591.4,1526.7 1608.0,1520.3 1633.6,1529.3 1627.2,1540.0 1595.2,1540.0" fill="#a9d4b2"/><polygon points="1613.8,1366.6 1628.5,1359.0 1631.1,1394.8 1620.8,1398.7 1608.0,1382.0" fill="#c5e2ca"/><polygon points="1638.8,1417.9 1651.6,1412.7 1663.1,1429.4 1650.3,1431.9 1640.1,1437.1" fill="#c5e2ca"/><polygon points="1650.3,1443.5 1687.4,1446.0 1697.7,1439.6 1697.7,1458.8 1710.5,1457.6 1690.0,1471.6 1684.9,1452.4 1654.1,1451.2" fill="#c5e2ca"/><polygon points="1700.2,1480.6 1716.9,1480.6 1716.9,1488.3 1705.4,1489.6" fill="#c5e2ca"/><polygon points="1655.4,1507.5 1674.6,1498.5 1701.5,1513.9 1672.1,1516.5 1661.8,1540.0 1654.1,1529.3" fill="#c5e2ca"/><polygon points="1720.7,1515.2 1729.7,1508.8 1741.2,1540.0 1725.8,1540.0" fill="#c5e2ca"/><polygon points="1592.7,1370.5 1608.0,1382.0 1600.4,1403.8 1592.7,1401.2" fill="#c5e2ca"/><polygon points="1620.8,1433.2 1640.1,1429.4 1633.6,1442.2 1623.4,1444.8" fill="#c5e2ca"/><polygon points="1659.3,1362.8 1683.6,1361.5 1710.5,1366.6 1711.8,1394.8 1699.0,1396.1 1697.7,1402.5 1687.4,1403.8 1673.3,1382.0 1672.1,1371.8" fill="#eef0ea" stroke="#c3d3d1" stroke-width="1.2"/><polygon points="1611.9,1394.8 1619.6,1391.0 1624.7,1374.3 1628.5,1379.4 1626.0,1408.9 1617.0,1408.9 1610.6,1398.7" fill="#eef0ea" stroke="#c3d3d1" stroke-width="1.2"/><polygon points="1686.1,1412.7 1690.0,1405.1 1693.8,1407.6 1692.5,1419.1" fill="#94b3f0"/><polygon points="1538.9,1480.6 1546.6,1487.0 1545.3,1490.8" fill="#94b3f0"/><polygon points="1765.2,1355.4 1776.9,1355.4 1771.5,1361.6 1765.2,1361.6" fill="#c5e2ca"/><polygon points="1782.2,1369.7 1798.4,1357.2 1800.2,1359.0 1791.2,1384.0 1793.0,1390.3 1802.0,1381.4 1814.5,1355.4 1824.3,1355.4 1814.5,1367.9 1807.3,1394.8 1812.7,1403.7 1810.9,1419.9 1794.8,1423.5 1781.4,1411.8 1781.4,1394.8" fill="#c5e2ca"/><polygon points="1818.1,1436.0 1832.4,1409.1 1837.8,1398.4 1845.8,1405.5 1843.2,1418.1 1837.8,1421.7 1821.7,1437.8" fill="#c5e2ca"/><polygon points="1839.6,1441.4 1855.7,1402.0 1864.7,1380.5 1879.0,1367.9 1866.4,1355.4 1875.4,1355.4 1886.2,1366.1 1893.3,1358.1 1900.5,1361.6 1895.1,1371.5 1896.9,1379.6 1887.9,1403.7 1904.1,1387.6 1905.0,1392.1 1886.2,1403.7 1871.8,1402.0 1870.0,1427.0 1857.5,1425.2 1855.7,1434.2 1857.5,1450.3 1852.1,1452.1" fill="#c5e2ca"/><polygon points="1870.0,1434.2 1880.8,1429.7 1880.8,1453.0 1875.4,1454.8 1870.0,1443.2" fill="#c5e2ca"/><polygon points="1878.1,1418.1 1887.9,1410.0 1893.3,1419.9 1886.2,1424.3" fill="#c5e2ca"/><polygon points="1840.5,1375.1 1844.9,1375.1 1850.3,1384.0 1840.5,1393.0" fill="#c5e2ca"/><polygon points="1923.8,1486.2 1939.9,1457.5 1948.9,1456.6 1954.2,1439.6 1961.4,1418.1 1969.5,1428.8 1950.6,1468.2 1929.1,1488.8" fill="#c5e2ca"/><polygon points="1873.6,1489.7 1882.6,1477.2 1887.9,1504.1 1887.9,1513.9 1883.5,1513.0" fill="#c5e2ca"/><polygon points="1954.2,1394.8 1954.2,1367.9 1965.0,1355.4 1962.3,1373.3 1973.0,1370.6 1973.9,1389.4 1974.8,1398.4 1967.7,1401.1" fill="#c5e2ca"/><polygon points="1993.6,1412.7 2000.8,1407.3 1997.2,1355.4 2006.2,1355.4 2008.9,1382.2 2004.4,1396.6 2013.3,1398.4 2018.7,1373.3 2015.1,1355.4 2031.3,1355.4 2025.9,1389.4 2028.6,1391.2 2020.5,1403.7 2020.5,1423.5 2016.9,1427.9 2011.6,1410.9 2004.4,1412.7 2006.2,1430.6 2000.8,1445.8 1996.3,1445.8 1999.0,1428.8 1997.2,1418.1" fill="#c5e2ca"/><polygon points="2019.6,1437.8 2029.5,1457.5 2024.1,1464.7 2020.5,1461.1" fill="#c5e2ca"/><polygon points="2043.8,1366.1 2049.2,1363.4 2063.5,1384.0 2065.3,1403.7 2058.1,1408.2 2048.3,1402.0 2045.6,1382.2" fill="#c5e2ca"/><polygon points="2047.4,1355.4 2068.9,1355.4 2061.7,1360.7 2049.2,1362.5" fill="#c5e2ca"/><polygon points="2039.3,1457.5 2045.6,1437.8 2051.0,1436.0 2059.9,1443.2 2061.7,1455.7 2072.5,1457.5 2072.5,1470.0 2068.9,1469.1 2063.5,1462.9 2056.3,1464.7 2063.5,1482.6 2054.6,1483.5 2043.8,1468.2" fill="#c5e2ca"/><polygon points="2076.0,1418.1 2081.4,1419.9 2088.6,1457.5 2099.3,1475.4 2090.4,1493.3 2074.3,1502.3 2065.3,1525.6 2052.8,1522.9 2065.3,1484.4 2079.6,1479.0 2086.8,1487.9 2090.4,1477.2 2083.2,1462.9 2079.6,1439.6" fill="#c5e2ca"/><polygon points="2079.6,1514.8 2090.4,1523.8 2083.2,1540.1 2072.5,1540.1 2072.5,1527.4" fill="#c5e2ca"/><polygon points="2106.5,1455.7 2112.8,1437.8 2116.4,1443.2 2116.4,1450.3 2111.9,1461.1" fill="#c5e2ca"/><polygon points="2167.4,1452.1 2176.4,1434.2 2187.1,1434.2 2190.7,1439.6 2183.5,1444.9 2172.8,1457.5" fill="#c5e2ca"/><polygon points="2126.2,1540.1 2133.4,1523.8 2144.1,1527.4 2147.7,1540.1" fill="#c5e2ca"/><polygon points="2015.1,1540.1 2021.4,1524.7 2024.1,1540.1" fill="#c5e2ca"/><polygon points="2034.8,1540.1 2036.6,1532.7 2047.4,1532.7 2051.0,1540.1" fill="#c5e2ca"/><polygon points="2197.2,1412.6 2209.9,1385.4 2226.2,1363.6 2235.3,1358.2 2244.4,1385.4 2235.3,1398.1 2226.2,1409.0 2219.0,1427.1 2204.5,1448.9 2200.8,1467.1 2189.9,1452.5 2195.4,1430.8" fill="#c5e2ca"/><polygon points="2229.9,1458.0 2233.5,1434.4 2249.8,1407.2 2262.5,1394.5 2277.1,1390.8 2291.6,1409.0 2284.3,1419.9 2262.5,1430.8 2244.4,1438.0 2235.3,1456.2" fill="#c5e2ca"/><polygon points="2249.8,1485.2 2258.9,1467.1 2277.1,1463.4 2295.2,1467.1 2297.0,1481.6 2277.1,1490.7 2258.9,1499.7" fill="#c5e2ca"/><polygon points="2238.9,1512.4 2251.7,1494.3 2258.9,1503.4 2251.7,1521.5 2262.5,1528.8 2268.0,1540.0 2238.9,1540.0" fill="#c5e2ca"/><polygon points="2150.0,1540.0 2150.0,1517.9 2168.2,1503.4 2186.3,1481.6 2197.2,1474.3 2204.5,1503.4 2197.2,1521.5 2204.5,1540.0" fill="#c5e2ca"/><polygon points="2166.3,1450.7 2173.6,1436.2 2186.3,1434.4 2182.7,1448.9 2171.8,1456.2" fill="#c5e2ca"/><polygon points="2404.1,1512.4 2413.2,1499.7 2431.4,1501.6 2418.7,1514.3" fill="#c5e2ca"/><polygon points="2460.4,1434.4 2462.2,1423.5 2474.9,1421.7 2484.0,1434.4 2482.2,1458.0 2469.5,1452.5" fill="#c5e2ca"/><polygon points="2413.2,1370.9 2422.3,1358.2 2444.1,1356.3 2458.6,1356.3 2447.7,1365.4 2433.2,1372.7 2425.9,1374.5" fill="#c5e2ca"/><polygon points="2484.0,1394.5 2505.8,1385.4 2520.3,1392.6 2516.7,1407.2 2534.8,1412.6 2533.0,1427.1 2549.3,1434.4 2585.7,1452.5 2591.1,1421.7 2567.5,1403.5 2558.4,1367.2 2582.0,1356.3 2606.0,1356.3 2606.0,1540.0 2505.8,1540.0 2500.3,1497.9 2513.0,1494.3 2527.6,1481.6 2543.9,1467.1 2542.1,1448.9 2522.1,1441.7 2509.4,1421.7 2494.9,1403.5" fill="#c5e2ca"/><polygon points="2545.7,1356.3 2567.5,1356.3 2558.4,1369.0 2549.3,1376.3" fill="#c5e2ca"/><polygon points="2511.2,1421.7 2520.3,1419.9 2554.8,1448.9 2549.3,1454.4 2531.2,1445.3" fill="#a9d4b2"/><polygon points="2549.3,1372.7 2576.6,1363.6 2606.0,1365.4 2606.0,1389.0 2576.6,1381.7 2556.6,1385.4" fill="#a9d4b2"/><polygon points="2545.7,1494.3 2567.5,1490.7 2582.0,1499.7 2576.6,1510.6 2553.0,1507.0" fill="#a9d4b2"/><polygon points="2249.8,1485.2 2266.2,1470.7 2291.6,1467.1 2297.0,1481.6 2277.1,1490.7 2258.9,1497.9" fill="#a9d4b2"/><polygon points="2200.8,1448.9 2211.7,1445.3 2215.3,1456.2 2206.3,1467.1" fill="#a9d4b2"/><polygon points="2567.5,1412.6 2574.8,1401.7 2589.3,1427.1 2587.5,1443.5 2582.0,1441.7 2576.6,1425.3" fill="#ffffff"/><polygon points="2142.3,1374.2 2153.1,1367.9 2160.2,1372.4 2146.8,1393.0 2147.7,1407.3 2142.3,1408.2 2140.5,1393.9 2145.9,1388.5 2141.4,1383.1" fill="#94b3f0"/><polygon points="1573.5,1367.9 1580.5,1358.0 1590.5,1356.0 1588.5,1379.9 1584.5,1384.8 1576.5,1377.9" fill="#94b3f0"/><polygon points="1347.6,1369.9 1353.6,1367.9 1365.5,1375.9 1368.5,1384.8 1361.6,1381.8 1349.6,1377.9" fill="#94b3f0"/><polygon points="1656.1,1485.4 1668.1,1478.4 1674.1,1485.4 1665.1,1491.3" fill="#94b3f0"/><polygon points="1399.4,1415.7 1403.4,1415.7 1407.3,1429.6 1403.4,1429.6" fill="#94b3f0"/><polygon points="2150.0,1367.2 2160.9,1372.7 2150.0,1390.8" fill="#94b3f0"/><polygon points="2361.5,1521.5 2370.5,1507.0 2366.0,1519.7" fill="#94b3f0"/><polyline points="1405.7,1355.1 1426.2,1393.5 1425.5,1439.6" fill="none" stroke="#f3bf62" stroke-width="5.0" stroke-linejoin="round" stroke-linecap="round"/><polyline points="1405.7,1355.1 1426.2,1393.5 1425.5,1439.6" fill="none" stroke="#fde7b0" stroke-width="2.5999999999999996" stroke-linejoin="round" stroke-linecap="round"/><polyline points="1462.0,1424.2 1442.8,1426.8 1427.5,1439.6 1415.9,1452.4 1405.7,1465.2 1403.1,1472.9 1401.8,1503.6" fill="none" stroke="#f3bf62" stroke-width="5.0" stroke-linejoin="round" stroke-linecap="round"/><polyline points="1462.0,1424.2 1442.8,1426.8 1427.5,1439.6 1415.9,1452.4 1405.7,1465.2 1403.1,1472.9 1401.8,1503.6" fill="none" stroke="#fde7b0" stroke-width="2.5999999999999996" stroke-linejoin="round" stroke-linecap="round"/><polyline points="1462.0,1424.2 1469.7,1458.8 1474.8,1484.4 1478.7,1503.6 1477.4,1540.0" fill="none" stroke="#f3bf62" stroke-width="5.0" stroke-linejoin="round" stroke-linecap="round"/><polyline points="1462.0,1424.2 1469.7,1458.8 1474.8,1484.4 1478.7,1503.6 1477.4,1540.0" fill="none" stroke="#fde7b0" stroke-width="2.5999999999999996" stroke-linejoin="round" stroke-linecap="round"/><polyline points="1468.4,1416.6 1487.6,1392.2 1504.3,1367.9 1524.7,1355.1" fill="none" stroke="#f3bf62" stroke-width="5.0" stroke-linejoin="round" stroke-linecap="round"/><polyline points="1468.4,1416.6 1487.6,1392.2 1504.3,1367.9 1524.7,1355.1" fill="none" stroke="#fde7b0" stroke-width="2.5999999999999996" stroke-linejoin="round" stroke-linecap="round"/><polyline points="1409.5,1461.4 1412.1,1471.6 1413.4,1484.4 1417.2,1503.6 1428.7,1522.8 1432.6,1540.0" fill="none" stroke="#f3bf62" stroke-width="5.0" stroke-linejoin="round" stroke-linecap="round"/><polyline points="1409.5,1461.4 1412.1,1471.6 1413.4,1484.4 1417.2,1503.6 1428.7,1522.8 1432.6,1540.0" fill="none" stroke="#fde7b0" stroke-width="2.5999999999999996" stroke-linejoin="round" stroke-linecap="round"/><polyline points="1395.4,1498.5 1410.8,1511.3 1436.4,1515.1 1462.0,1512.6 1478.7,1510.0" fill="none" stroke="#f3bf62" stroke-width="5.0" stroke-linejoin="round" stroke-linecap="round"/><polyline points="1395.4,1498.5 1410.8,1511.3 1436.4,1515.1 1462.0,1512.6 1478.7,1510.0" fill="none" stroke="#fde7b0" stroke-width="2.5999999999999996" stroke-linejoin="round" stroke-linecap="round"/><polyline points="1462.0,1512.6 1474.8,1522.8 1479.9,1540.0" fill="none" stroke="#f3bf62" stroke-width="5.0" stroke-linejoin="round" stroke-linecap="round"/><polyline points="1462.0,1512.6 1474.8,1522.8 1479.9,1540.0" fill="none" stroke="#fde7b0" stroke-width="2.5999999999999996" stroke-linejoin="round" stroke-linecap="round"/><polyline points="1440.3,1416.6 1474.8,1414.0" fill="none" stroke="#f3bf62" stroke-width="5.0" stroke-linejoin="round" stroke-linecap="round"/><polyline points="1440.3,1416.6 1474.8,1414.0" fill="none" stroke="#fde7b0" stroke-width="2.5999999999999996" stroke-linejoin="round" stroke-linecap="round"/><polyline points="2135.5,1541.5 2150.0,1521.5 2173.6,1497.9 2191.7,1467.1 2186.3,1447.1 2191.7,1419.9 2191.7,1409.9 2209.9,1389.0 2228.1,1357.2 2235.3,1354.9" fill="none" stroke="#f3bf62" stroke-width="5.0" stroke-linejoin="round" stroke-linecap="round"/><polyline points="2135.5,1541.5 2150.0,1521.5 2173.6,1497.9 2191.7,1467.1 2186.3,1447.1 2191.7,1419.9 2191.7,1409.9 2209.9,1389.0 2228.1,1357.2 2235.3,1354.9" fill="none" stroke="#fde7b0" stroke-width="2.5999999999999996" stroke-linejoin="round" stroke-linecap="round"/><polyline points="2191.7,1419.9 2209.9,1427.1 2226.2,1412.6 2251.7,1386.3 2277.1,1392.6 2284.3,1405.3 2313.4,1396.3 2346.0,1392.6 2366.0,1386.3 2389.6,1380.8 2407.8,1387.2 2425.9,1383.2 2451.3,1387.6 2476.7,1360.0 2484.0,1357.2 2494.9,1354.9" fill="none" stroke="#f3bf62" stroke-width="5.0" stroke-linejoin="round" stroke-linecap="round"/><polyline points="2191.7,1419.9 2209.9,1427.1 2226.2,1412.6 2251.7,1386.3 2277.1,1392.6 2284.3,1405.3 2313.4,1396.3 2346.0,1392.6 2366.0,1386.3 2389.6,1380.8 2407.8,1387.2 2425.9,1383.2 2451.3,1387.6 2476.7,1360.0 2484.0,1357.2 2494.9,1354.9" fill="none" stroke="#fde7b0" stroke-width="2.5999999999999996" stroke-linejoin="round" stroke-linecap="round"/><polyline points="2484.0,1357.2 2505.8,1365.4 2543.9,1365.4 2549.3,1360.0" fill="none" stroke="#f3bf62" stroke-width="5.0" stroke-linejoin="round" stroke-linecap="round"/><polyline points="2484.0,1357.2 2505.8,1365.4 2543.9,1365.4 2549.3,1360.0" fill="none" stroke="#fde7b0" stroke-width="2.5999999999999996" stroke-linejoin="round" stroke-linecap="round"/><polyline points="1588.5,1358.0 1604.4,1363.9 1606.4,1368.9" fill="none" stroke="#f3bf62" stroke-width="4.6" stroke-linejoin="round" stroke-linecap="round"/><polyline points="1588.5,1358.0 1604.4,1363.9 1606.4,1368.9" fill="none" stroke="#fde7b0" stroke-width="2.2" stroke-linejoin="round" stroke-linecap="round"/><polyline points="1586.5,1355 1586.5,1380 1763.6,1540" fill="none" stroke="#666" stroke-width="2" stroke-dasharray="4 4"/><line x1="2073.4" y1="1355" x2="2073.4" y2="1540" fill="none" stroke="#666" stroke-width="2" stroke-dasharray="4 4"/><line x1="2482.7" y1="1355" x2="2482.7" y2="1540" fill="none" stroke="#666" stroke-width="2" stroke-dasharray="4 4"/><circle cx="1462.7" cy="1424" r="5.3" fill="#f5f5f5" stroke="#222" stroke-width="2"/><circle cx="2522.6" cy="1373.2" r="4.2" fill="#f5f5f5" stroke="#333" stroke-width="2"/><text x="1391.4" y="1410.7" font-size="24" font-weight="700" fill="#202124" font-family="Liberation Sans" paint-order="stroke" stroke="#fff" stroke-width="4" stroke-linejoin="round" textLength="145.3" lengthAdjust="spacingAndGlyphs">Sacramento</text><text x="1302.8" y="1496.3" font-size="24" font-weight="700" fill="#202124" font-family="Liberation Sans" paint-order="stroke" stroke="#fff" stroke-width="4" stroke-linejoin="round" stroke-opacity="0.85" textLength="170.2" lengthAdjust="spacingAndGlyphs">San Francisco</text><text x="1376.5" y="1540" font-size="24" font-weight="700" fill="#202124" font-family="Liberation Sans" paint-order="stroke" stroke="#fff" stroke-width="4" stroke-linejoin="round" textLength="112" lengthAdjust="spacingAndGlyphs">San Jose</text><text x="2229.9" y="1378.5" font-size="25" fill="#4a4d52" font-family="Liberation Sans" paint-order="stroke" stroke="#fff" stroke-width="4" stroke-linejoin="round" textLength="72.6" lengthAdjust="spacing">UTAH</text><text x="2485" y="1363" font-size="24" font-weight="700" fill="#202124" font-family="Liberation Sans" paint-order="stroke" stroke="#fff" stroke-width="4" stroke-linejoin="round" textLength="76" lengthAdjust="spacingAndGlyphs">Junction</text><text x="2540" y="1548" font-size="22" fill="#1f1f1f" font-family="Liberation Sans" paint-order="stroke" stroke="#fff" stroke-width="4" stroke-linejoin="round">Du</text><defs><radialGradient id="heat" cx="0.5" cy="0.5" r="0.5">
<stop offset="0" stop-color="#c03a58" stop-opacity="0.72"/>
<stop offset="0.22" stop-color="#c83a55" stop-opacity="0.7"/>
<stop offset="0.36" stop-color="#f07a50" stop-opacity="0.7"/>
<stop offset="0.5" stop-color="#f0e070" stop-opacity="0.66"/>
<stop offset="0.68" stop-color="#98f070" stop-opacity="0.6"/>
<stop offset="0.86" stop-color="#90f070" stop-opacity="0.3"/>
<stop offset="1" stop-color="#80f060" stop-opacity="0"/>
</radialGradient></defs><circle cx="1387.1" cy="1508.1" r="62" fill="url(#heat)"/><circle cx="1387.1" cy="1508.1" r="4.6" fill="none" stroke="#701818" stroke-width="1.8"/></g></svg>
<div style="position:absolute;left:524px;top:1373px;width:301.8px;height:71.6px;background:#fff;border-radius:3px;box-shadow:0 1px 4px rgba(0,0,0,0.3);"></div>
<div style="position:absolute;left:648px;top:1373px;width:1.5px;height:71.6px;background:#e6e6e6;"></div>
<div class="t" id="t67" style="top:1392.21px;font-size:32px;color:#000;font-weight:700;letter-spacing:-0.500px;left:554.50px;"><span>Map</span></div>
<div class="t" id="t68" style="top:1392.21px;font-size:32px;color:#565656;letter-spacing:0.120px;left:680.20px;"><span>Satellite</span></div>
</div></body></html>
